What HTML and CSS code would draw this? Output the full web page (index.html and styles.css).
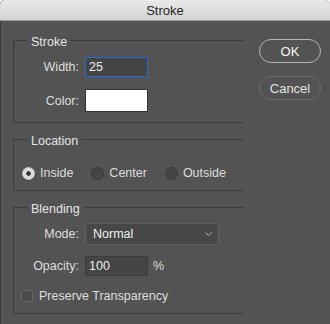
FILE: index.html
```html
<!DOCTYPE html>
<html lang="en">
<head>
  <meta charset="UTF-8" />
  <title>Stroke</title>
  <link rel="stylesheet" href="styles.css">
</head>
<body>
  <div class="dialog">
    <div class="title-bar">Stroke</div>

    <div class="dialog-body">
      <div class="groups">
        <!-- Stroke -->
        <fieldset class="group group-stroke">
          <legend>Stroke</legend>
          <div class="field">
            <label class="field-label">Width:</label>
            <input class="text-input focused" type="text" value="25">
          </div>
          <div class="field field-color">
            <label class="field-label">Color:</label>
            <div class="swatch"></div>
          </div>
        </fieldset>

        <!-- Location -->
        <fieldset class="group group-location">
          <legend>Location</legend>
          <div class="radio-row">
            <label class="radio"><input type="radio" name="loc" checked> Inside</label>
            <label class="radio"><input type="radio" name="loc"> Center</label>
            <label class="radio"><input type="radio" name="loc"> Outside</label>
          </div>
        </fieldset>

        <!-- Blending -->
        <fieldset class="group group-blending">
          <legend>Blending</legend>
          <div class="field">
            <label class="field-label">Mode:</label>
            <div class="select">
              <span>Normal</span>
              <svg width="7" height="4" viewBox="0 0 7 4"><path d="M0.5 0.5 L3.5 3.5 L6.5 0.5" fill="none" stroke="#bdbdbd" stroke-width="1"/></svg>
            </div>
          </div>
          <div class="field field-opacity">
            <label class="field-label">Opacity:</label>
            <input class="text-input" type="text" value="100">
            <span class="unit">%</span>
          </div>
          <label class="checkbox"><input type="checkbox"> Preserve Transparency</label>
        </fieldset>
      </div>

      <div class="buttons">
        <button class="btn btn-default">OK</button>
        <button class="btn">Cancel</button>
      </div>
    </div>
  </div>
</body>
</html>
```

FILE: styles.css
```css
:root {
  --panel: #535353;
  --line: #3d3d3d;
  --text: #dedede;
  --field: #454545;
  --focus: #2668d4;
  --font-stack: 'Liberation Sans', Arial, sans-serif;
}

* {
  box-sizing: border-box;
}

body {
  margin: 0;
  background: #ffffff;
  font-family: var(--font-stack);
  font-size: 12.5px;
  color: var(--text);
}

.dialog {
  width: 330px;
  height: 324px;
  background-color: var(--panel);
  border-radius: 5px 5px 0 0;
  box-shadow: inset 1px 0 0 #3a3a3a;
  overflow: hidden;
}

.title-bar {
  height: 21px;
  line-height: 21px;
  text-align: center;
  font-size: 13px;
  color: #262626;
  background: linear-gradient(#e9e9e9, #d3d3d3);
  border-bottom: 1px solid #9c9c9c;
}

.dialog-body {
  display: flex;
  gap: 15px;
  padding: 10px 0 0 13px;
}

.groups {
  width: 231px;
}

.group {
  margin: 0;
  padding: 0;
  border: 1px solid var(--line);
  border-right: none;
  min-width: 0;
}

.group + .group {
  margin-top: 7px;
}

/* legend text sits a little below the group line */
.group legend {
  margin-left: 13px;
  padding: 3px 4px 0;
  line-height: 16px;
  font-size: 12.5px;
  color: #e4e4e4;
}

.group-stroke {
  padding: 7px 0 10px;
}

.group-location {
  padding: 16px 0 9px;
}

.group-blending {
  padding: 6px 0 9px;
}

.field {
  display: flex;
  align-items: center;
  gap: 6px;
}

.field-color {
  margin-top: 12px;
}

.field-opacity {
  margin-top: 11px;
}

.field-label {
  width: 65px;
  text-align: right;
}

.text-input {
  width: 63px;
  height: 20px;
  margin: 0;
  padding: 0 3px;
  border: 1px solid #3c3c3c;
  background-color: var(--field);
  color: #ececec;
  font-family: var(--font-stack);
  font-size: 12.5px;
  outline: none;
}

.text-input.focused {
  border-color: var(--focus);
}

.swatch {
  width: 63px;
  height: 23px;
  background-color: #ffffff;
  border: 1px solid #333333;
}

.unit {
  margin-left: -1px;
}

.select {
  width: 134px;
  height: 22px;
  display: flex;
  align-items: center;
  justify-content: space-between;
  padding: 0 6px 0 7px;
  background-color: #474747;
  border: 1px solid #5f5f5f;
  border-radius: 3px;
  color: #f0f0f0;
}

.radio-row {
  display: flex;
  gap: 18px;
  padding-left: 8px;
  line-height: 16px;
}

.radio {
  display: flex;
  align-items: center;
  gap: 5px;
}

.radio input {
  appearance: none;
  width: 13px;
  height: 13px;
  margin: 0;
  border-radius: 50%;
  background-color: #464646;
  border: 1px solid #3a3a3a;
}

.radio input:checked {
  border-color: #cfcfcf;
  background: radial-gradient(circle, #3a3a3a 0 2px, #dcdcdc 2.6px);
}

.checkbox {
  display: flex;
  align-items: center;
  gap: 6px;
  margin: 12px 0 0 7px;
  line-height: 16px;
}

.checkbox input {
  appearance: none;
  width: 12px;
  height: 12px;
  margin: 0;
  border: 1px solid #6a6a6a;
  border-radius: 2px;
  background-color: #4b4b4b;
}

.buttons {
  display: flex;
  flex-direction: column;
  gap: 13px;
  padding-top: 8px;
}

.btn {
  width: 62px;
  height: 24px;
  margin: 0;
  padding: 0;
  border-radius: 12px;
  border: 1px solid #6c6c6c;
  background: transparent;
  color: #e2e2e2;
  font-family: var(--font-stack);
  font-size: 13px;
}

.btn-default {
  border-color: #b5b5b5;
  color: #f6f6f6;
}
```
